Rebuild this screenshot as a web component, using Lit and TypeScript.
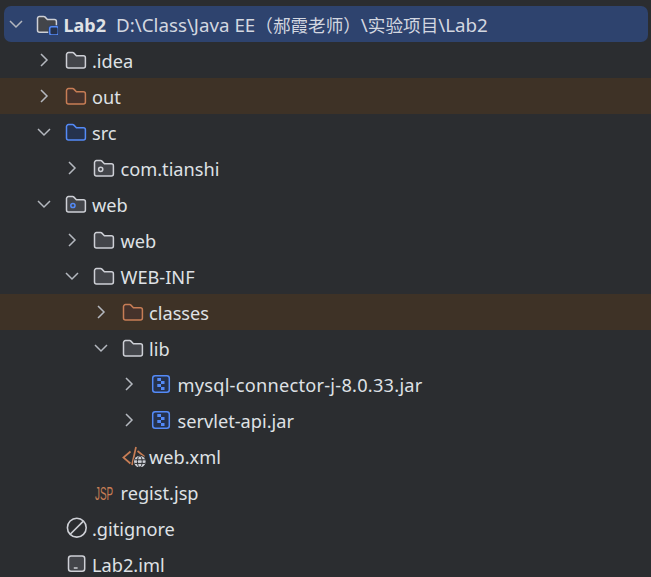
import { LitElement, html, css, svg } from "lit";
import { customElement } from "lit/decorators.js";

const GRAY = { s: "#ced0d6", f: "#43454a" };
const ORANGE = { s: "#c77d55", f: "#45322b" };
const BLUE = { s: "#548af7", f: "#25324d" };

const folderPath = "M1.5 5.6a2 2 0 0 1 2-2h4.1c.5 0 1 .2 1.3.5l2.5 2.6h7a2 2 0 0 1 2 2V17a2 2 0 0 1-2 2H3.5a2 2 0 0 1-2-2z";
const ic = (inner: unknown) => html`<svg class="ic" viewBox="0 0 22 22" width="22" height="22" fill="none">${inner}</svg>`;
const folder = (c: { s: string; f: string }) => ic(svg`<path d=${folderPath} fill=${c.f} stroke=${c.s} stroke-width="1.5"/>`);

const icons: Record<string, () => unknown> = {
  gray: () => folder(GRAY),
  orange: () => folder(ORANGE),
  blue: () => folder(BLUE),
  pkg: () => ic(svg`<path d=${folderPath} fill=${GRAY.f} stroke=${GRAY.s} stroke-width="1.5"/><circle cx="7.7" cy="12.3" r="2.1" stroke=${GRAY.s} stroke-width="1.5"/>`),
  webroot: () => ic(svg`<path d=${folderPath} fill=${GRAY.f} stroke=${GRAY.s} stroke-width="1.5"/><circle cx="7.9" cy="12.5" r="2.1" stroke=${BLUE.s} stroke-width="1.5"/>`),
  module: () => ic(svg`<path d="M1.5 5.4a2 2 0 0 1 2-2h4.1c.5 0 1 .2 1.3.5l2.5 2.6h7a2 2 0 0 1 2 2v8.7a2 2 0 0 1-2 2H3.5a2 2 0 0 1-2-2z" fill=${GRAY.f} stroke=${GRAY.s} stroke-width="1.5"/><rect x="12.2" y="12.2" width="11" height="10.6" rx="2.6" fill="#2e436e"/><rect x="13.7" y="13.7" width="8.6" height="8.3" rx="2" fill="#25324d" stroke=${BLUE.s} stroke-width="1.5"/>`),
  jar: () => ic(svg`<rect x="2.7" y="2.7" width="16.6" height="16.6" rx="2.5" fill=${BLUE.f} stroke=${BLUE.s} stroke-width="1.5"/><g fill=${BLUE.s}><rect x="7.3" y="5" width="3.7" height="3"/><rect x="11" y="8" width="3.5" height="3"/><rect x="7.3" y="11" width="3.7" height="3"/><rect x="11" y="14" width="3.5" height="3"/></g>`),
  xml: () => html`<svg class="ic" viewBox="0 0 24 22" width="24" height="22" fill="none" style="margin-right:-2px">${svg`<g stroke=${ORANGE.s} stroke-width="1.7" fill="none"><path d="M8.5 6.5 1.4 12.5l7 6"/><path d="M14 2 10 20"/><path d="M15.5 6l7 5.6"/></g><circle cx="17.8" cy="16.6" r="6.6" fill="#2b2d30"/><circle cx="17.8" cy="16.6" r="5.8" fill="#ced0d6"/><g stroke="#2b2d30" stroke-width="1" fill="none"><ellipse cx="17.8" cy="16.6" rx="2.4" ry="5.6"/><path d="M12.5 14.8h10.6M12.5 18.4h10.6"/></g>`}</svg>`,
  jsp: () => html`<svg class="ic" viewBox="0 0 22 22" width="22" height="22" style="overflow:visible">${svg`<text transform="translate(2 19) scale(.55 1)" fill=${ORANGE.s} font-family="Liberation Sans, sans-serif" font-size="18">JSP</text>`}</svg>`,
  ignore: () => ic(svg`<circle cx="11.8" cy="10.7" r="9.4" stroke=${GRAY.s} stroke-width="1.6" fill="#2b2d30"/><path d="M5.2 17.3 18.4 4.1" stroke=${GRAY.s} stroke-width="1.6"/>`),
  iml: () => ic(svg`<rect x="3.5" y="3" width="16.2" height="15.3" rx="2.5" fill=${GRAY.f} stroke=${GRAY.s} stroke-width="1.5"/><path d="M8.8 15h3.8" stroke=${GRAY.s} stroke-width="1.5"/>`),
};

interface Row { level: number; chev?: "r" | "d"; icon: string; label: string; tint?: boolean; track?: number; }

const rows: Row[] = [
  { level: 1, chev: "r", icon: "gray", label: ".idea" },
  { level: 1, chev: "r", icon: "orange", label: "out", tint: true },
  { level: 1, chev: "d", icon: "blue", label: "src" },
  { level: 2, chev: "r", icon: "pkg", label: "com.tianshi" },
  { level: 1, chev: "d", icon: "webroot", label: "web" },
  { level: 2, chev: "r", icon: "gray", label: "web" },
  { level: 2, chev: "d", icon: "gray", label: "WEB-INF" },
  { level: 3, chev: "r", icon: "orange", label: "classes", tint: true },
  { level: 3, chev: "d", icon: "gray", label: "lib" },
  { level: 4, chev: "r", icon: "jar", label: "mysql-connector-j-8.0.33.jar", track: 0.25 },
  { level: 4, chev: "r", icon: "jar", label: "servlet-api.jar" },
  { level: 3, icon: "xml", label: "web.xml" },
  { level: 2, icon: "jsp", label: "regist.jsp" },
  { level: 1, icon: "ignore", label: ".gitignore" },
  { level: 1, icon: "iml", label: "Lab2.iml" },
];

const chevron = (c?: "r" | "d") =>
  html`<span class="chev">${c
    ? html`<svg viewBox="0 0 22 22" width="22" height="22" fill="none" stroke="#b4b8bf" stroke-width="1.5"><path d=${c === "r" ? "M8 5l6 6-6 6" : "M5 8l6 6 6-6"}/></svg>`
    : null}</span>`;

@customElement("app-root")
export class AppRoot extends LitElement {
  static styles = css`
    :host {
      display: block;
      height: 577px;
      overflow: hidden;
      background: #2b2d30;
      color: #dfe1e5;
      font-family: "Noto Sans", "Noto Sans CJK SC", sans-serif;
      font-size: 18.2px;
    }
    .tree { padding-top: 6px; }
    .row {
      display: flex;
      align-items: center;
      height: 36px;
      white-space: nowrap;
    }
    .root {
      margin: 0 3px 0 4px;
      padding-left: 1px;
      background: #2e436e;
      border-radius: 7px;
    }
    .root .chev { margin-right: 9px; }
    .tint { background: #3e3226; }
    .chev { width: 22px; height: 22px; flex: none; margin-right: 10px; }
    .ic, .chev svg { display: block; flex: none; }
    .label { margin-left: 5.5px; padding-top: 2px; line-height: 34px; }
    .root .label { padding-top: 1px; line-height: 35px; }
    .name { font-weight: 700; font-size: 18px; }
    .path { margin-left: 10px; color: #d3d7e0; font-size: 18.75px; }
    .cjk { font-size: 17.6px; }
  `;

  render() {
    return html`<div class="tree">
      <div class="row root">
        ${chevron("d")}${icons.module()}
        <span class="label"><span class="name">Lab2</span><span class="path">D:\\Class\\Java EE<span class="cjk">（郝霞老师）</span>\\<span class="cjk">实验项目</span>\\Lab2</span></span>
      </div>
      ${rows.map(
        (r) => html`<div class="row ${r.tint ? "tint" : ""}" style="padding-left:${4 + r.level * 28.5}px">
          ${chevron(r.chev)}${icons[r.icon]()}<span class="label" style=${r.track ? `letter-spacing:${r.track}px` : ""}>${r.label}</span>
        </div>`
      )}
    </div>`;
  }
}
